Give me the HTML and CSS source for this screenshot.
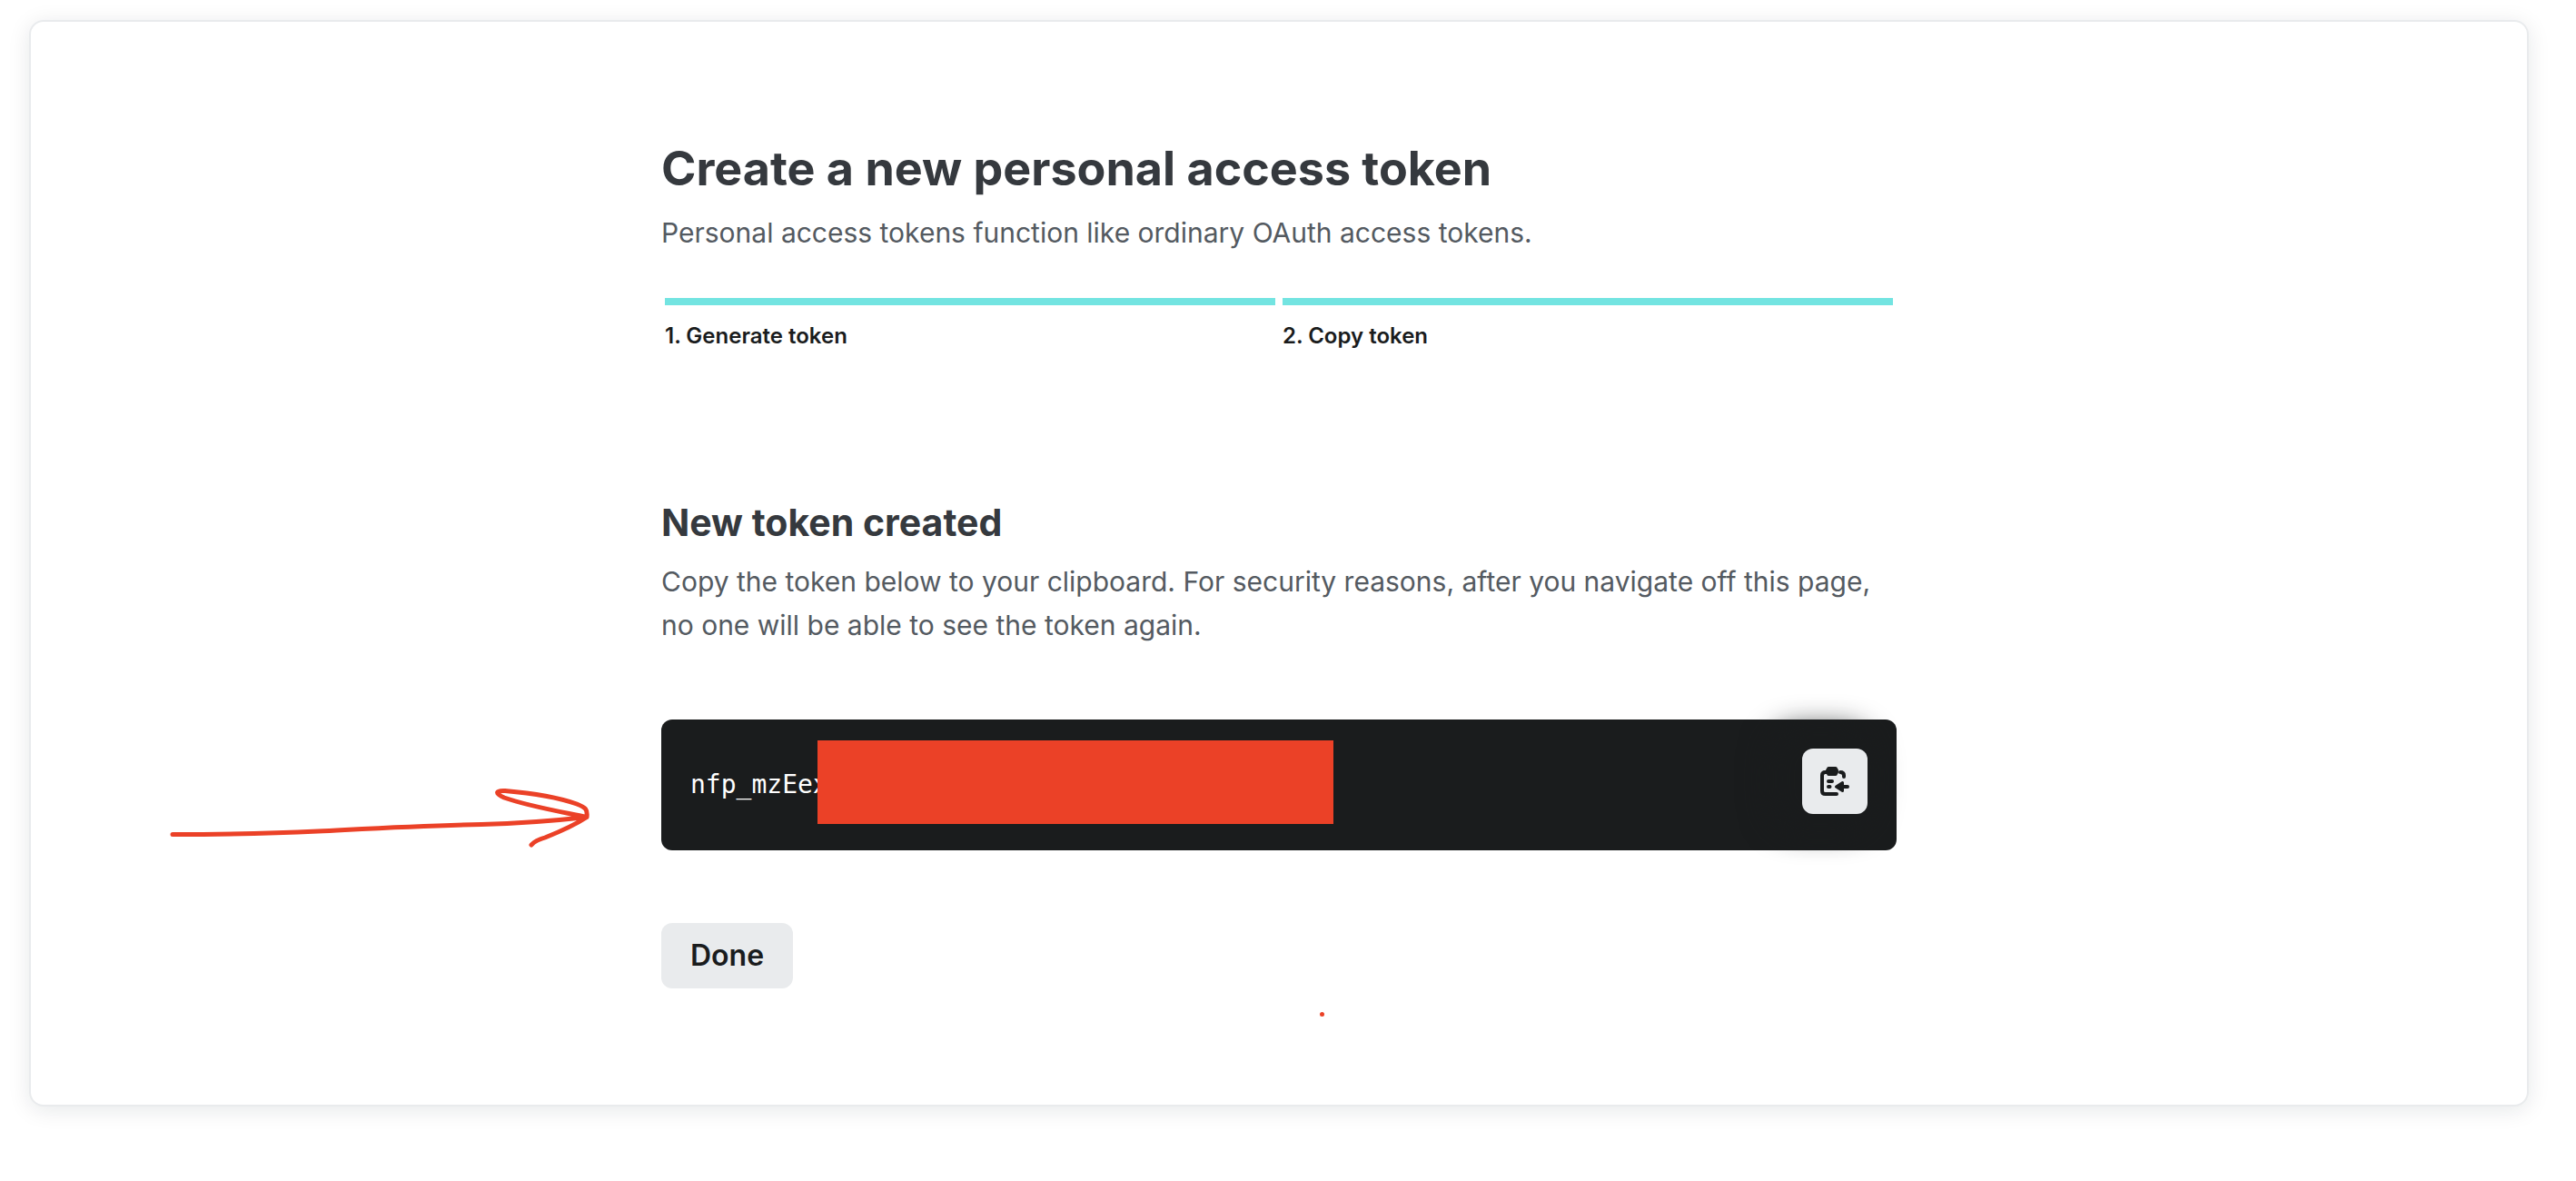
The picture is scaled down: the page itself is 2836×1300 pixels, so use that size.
FILE: index.html
```html
<!DOCTYPE html>
<html lang="en">
<head>
<meta charset="utf-8">
<title>Create a new personal access token</title>
<link rel="stylesheet" href="styles.css">
</head>
<body>
<main class="card">
  <div class="content">
    <header class="intro">
      <h1 class="title">Create a new personal access token</h1>
      <p class="text">Personal access tokens function like ordinary OAuth access tokens.</p>
    </header>
    <ol class="steps">
      <li class="step">1. Generate token</li>
      <li class="step">2. Copy token</li>
    </ol>
    <section class="created">
      <h2 class="subtitle">New token created</h2>
      <p class="text">Copy the token below to your clipboard. For security reasons, after you navigate off this page, no one will be able to see the token again.</p>
      <div class="token">
        <code class="token-value">nfp_mzEex</code>
        <span class="redaction"></span>
        <button class="button copy" type="button" aria-label="Copy to clipboard">
          <svg class="copy-icon" viewBox="0 0 32 32" aria-hidden="true">
            <path d="M8 6H5.500Q2 6 2 9.500V26.500Q2 30 5.500 30H18M22 6Q26 6 26 9.500V11" fill="none" stroke="currentColor" stroke-width="4" stroke-linecap="round"/>
            <path d="M9 0H17Q18.500 0 19 2Q20 2.500 20 5Q20 7.500 19 8Q18.500 10 17 10H9Q7.500 10 7 8Q6 7.500 6 5Q6 2.500 7 2Q7.500 0 9 0Z" fill="currentColor"/>
            <path d="M9 16H13M9 22H10.500M24 22H30" fill="none" stroke="currentColor" stroke-width="4" stroke-linecap="round"/>
            <path d="M17.500 22L24.500 17.500V26.500Z" fill="currentColor" stroke="currentColor" stroke-width="3" stroke-linejoin="round"/>
          </svg>
        </button>
      </div>
      <button class="button done" type="button">Done</button>
    </section>
    <svg class="arrow" viewBox="0 0 520 120" aria-hidden="true">
      <path d="M30 78.500C90 78.500 130 78 190 75C250 72 300 69 370 67.500C410 66.500 445 64 486 59.500C455 53 420 47 395 38C384 33 386 30 396 30.500C425 33 455 38 475 45C485 49 487 51 486 59.500C470 70 455 76 440 82C431 85 429 86 425 90"/>
    </svg>
    <span class="dot"></span>
  </div>
</main>
</body>
</html>
```
FILE: styles.css
```css
* {
  box-sizing: border-box;
}

body {
  margin: 0;
  padding: 22px 52px 64px 32px;
  background: #fff;
  color: #1a1c1d;
  font-family: Inter, "Liberation Sans", sans-serif;
}

.card {
  padding: 128px 32px;
  border: 2px solid #e9ebed;
  border-radius: 16px;
  background: #fff;
  box-shadow: 0 4px 24px rgba(14, 30, 37, 0.1);
}

.content {
  position: relative;
  max-width: 1360px;
  margin: 0 auto;
}

.title,
.subtitle,
.text,
.steps {
  margin: 0;
  padding: 0;
}

.title {
  color: #35393e;
  font-size: 52px;
  font-weight: 650;
  line-height: 68px;
}

.subtitle {
  color: #35393e;
  font-size: 41px;
  font-weight: 650;
  line-height: 58px;
}

.text {
  margin-top: 12px;
  color: #545a61;
  font-size: 30px;
  line-height: 48px;
}

.steps {
  display: flex;
  gap: 8px;
  margin: 48px 4px 0;
  list-style: none;
}

.step {
  flex: 1;
  padding-top: 18px;
  border-top: 8px solid #73e4e1;
  font-size: 24px;
  font-weight: 600;
  line-height: 32px;
}

.created {
  padding-top: 160px;
}

.token {
  position: relative;
  display: flex;
  align-items: center;
  justify-content: space-between;
  min-height: 144px;
  margin-top: 80px;
  padding: 32px;
  border-radius: 12px;
  background: #1a1c1d;
}

.token-value {
  color: #fff;
  font-family: "DejaVu Sans Mono", monospace;
  font-size: 28px;
  line-height: 40px;
}

.redaction {
  position: absolute;
  top: 23px;
  left: 172px;
  width: 568px;
  height: 92px;
  background: #eb4127;
}

.button {
  height: 72px;
  border: 0;
  border-radius: 12px;
  background: #e9ebed;
  color: #1a1c1d;
  font: inherit;
  font-size: 32px;
  font-weight: 600;
  line-height: 48px;
  cursor: pointer;
}

.copy {
  display: grid;
  place-items: center;
  align-self: flex-start;
  width: 72px;
  padding: 0;
  box-shadow: -16px -2px 32px 20px #1a1c1d;
}

.copy-icon {
  width: 32px;
  height: 32px;
}

.done {
  margin-top: 80px;
  padding: 0 32px;
}

.arrow {
  position: absolute;
  top: 688px;
  left: -568px;
  width: 520px;
  height: 120px;
  fill: none;
  stroke: #eb4127;
  stroke-width: 5;
  stroke-linecap: round;
  stroke-linejoin: round;
}

.dot {
  position: absolute;
  top: 962px;
  left: 725px;
  width: 5px;
  height: 5px;
  border-radius: 50%;
  background: #eb4127;
}
```
